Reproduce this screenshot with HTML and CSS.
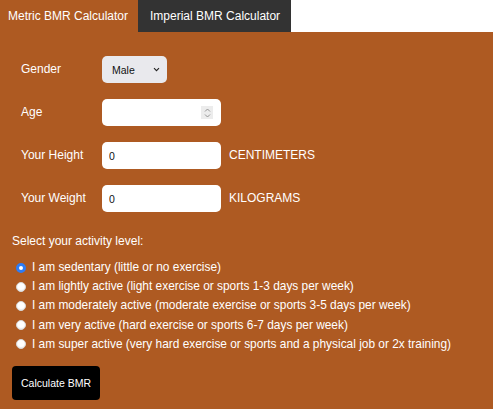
FILE: index.html
```html
<!DOCTYPE html>
<html lang="en">
<head>
<meta charset="utf-8">
<title>BMR Calculator</title>
<link rel="stylesheet" href="styles.css">
</head>
<body>
<nav class="tabs">
  <button class="tab tab-active" type="button">Metric BMR Calculator</button>
  <button class="tab" type="button">Imperial BMR Calculator</button>
</nav>
<main class="panel">
  <form class="bmr-form">
    <div class="fields">
      <label class="field-label" for="gender">Gender</label>
      <div class="select-wrap">
        <select id="gender" class="select">
          <option>Male</option>
          <option>Female</option>
        </select>
        <svg class="chevron" width="7" height="5" viewBox="0 0 7 5"><path d="M1 1.2 L3.5 3.7 L6 1.2" fill="none" stroke="#222" stroke-width="1.1"/></svg>
      </div>
      <span></span>

      <label class="field-label" for="age">Age</label>
      <div class="input-wrap">
        <input id="age" class="input" type="text">
        <span class="spinner">
          <svg width="7" height="12" viewBox="0 0 7 12"><path d="M1 4.5 L3.5 2 L6 4.5" fill="none" stroke="#8a8a8a" stroke-width="0.9"/><path d="M1 7.5 L3.5 10 L6 7.5" fill="none" stroke="#8a8a8a" stroke-width="0.9"/></svg>
        </span>
      </div>
      <span></span>

      <label class="field-label" for="height">Your Height</label>
      <input id="height" class="input" type="text" value="0">
      <span class="unit">CENTIMETERS</span>

      <label class="field-label" for="weight">Your Weight</label>
      <input id="weight" class="input" type="text" value="0">
      <span class="unit">KILOGRAMS</span>
    </div>

    <fieldset class="activity">
      <legend class="activity-title">Select your activity level:</legend>
      <label class="radio-row"><input class="radio" type="radio" name="act" checked> I am sedentary (little or no exercise)</label>
      <label class="radio-row"><input class="radio" type="radio" name="act"> I am lightly active (light exercise or sports 1-3 days per week)</label>
      <label class="radio-row"><input class="radio" type="radio" name="act"> I am moderately active (moderate exercise or sports 3-5 days per week)</label>
      <label class="radio-row"><input class="radio" type="radio" name="act"> I am very active (hard exercise or sports 6-7 days per week)</label>
      <label class="radio-row"><input class="radio" type="radio" name="act"> I am super active (very hard exercise or sports and a physical job or 2x training)</label>
    </fieldset>

    <button class="calc" type="button">Calculate BMR</button>
  </form>
</main>
</body>
</html>
```
FILE: styles.css
```css
* { box-sizing: border-box; }
html, body { height: 100%; }
body {
  margin: 0;
  background: #ffffff;
  font-family: "Liberation Sans", Arial, Helvetica, sans-serif;
  color: #ffffff;
  display: flex;
  flex-direction: column;
}
.tabs {
  display: flex;
  height: 32px;
  flex: none;
}
.tab {
  border: 0;
  margin: 0;
  height: 32px;
  padding: 0 11px 0 12px;
  font-family: inherit;
  font-size: 12px;
  color: #ffffff;
  background: #333333;
  cursor: pointer;
}
.tab-active {
  background: #ae5a22;
  padding: 0 10px 0 8px;
}
.panel {
  flex: 1;
  background: #ae5a22;
  padding: 24px 12px 0 12px;
}
.fields {
  margin-left: 9px;
  display: grid;
  grid-template-columns: 81px auto 1fr;
  row-gap: 16px;
  column-gap: 8px;
  align-items: center;
  justify-items: start;
}
.field-label {
  grid-column: 1;
  font-size: 12px;
  line-height: 15px;
}
.fields > :nth-child(3n+2) { margin-left: -8px; }
.select-wrap {
  position: relative;
  width: 65px;
  height: 27px;
}
.select {
  appearance: none;
  -webkit-appearance: none;
  width: 65px;
  height: 27px;
  border: 0;
  border-radius: 5px;
  background: #e9e9ed;
  padding: 0 0 0 10px;
  font-family: inherit;
  font-size: 10.5px;
  color: #111;
}
.chevron {
  position: absolute;
  right: 7px;
  top: 11px;
  pointer-events: none;
}
.input-wrap {
  position: relative;
  width: 119px;
  height: 27px;
}
.input {
  width: 119px;
  height: 27px;
  border: 0;
  border-radius: 5px;
  background: #ffffff;
  padding: 0 0 0 7px;
  font-family: inherit;
  font-size: 10.5px;
  color: #111;
}
.spinner {
  position: absolute;
  right: 8px;
  top: 7px;
  width: 12px;
  height: 13px;
  background: #ececec;
  display: flex;
  align-items: center;
  justify-content: center;
}
.unit {
  font-size: 12px;
  line-height: 15px;
}
.activity {
  border: 0;
  margin: 22px 0 0 0;
  padding: 0;
  display: flex;
  flex-direction: column;
}
.activity-title {
  padding: 0;
  font-size: 12px;
  line-height: 15px;
  margin-bottom: 9px;
}
.radio-row {
  display: flex;
  align-items: center;
  gap: 6px;
  height: 19.2px;
  font-size: 11.9px;
  line-height: 15px;
  white-space: nowrap;
}
.radio {
  appearance: none;
  -webkit-appearance: none;
  margin: 0 0 0 4px;
  width: 10px;
  height: 10px;
  border-radius: 50%;
  background: #ffffff;
  border: 1px solid #d7d7d7;
  box-shadow: inset 0 -1px 1px rgba(0,0,0,0.08);
  flex: none;
}
.radio:checked {
  border: 3px solid #2d7cf6;
  box-shadow: none;
}
.calc {
  margin-top: 12px;
  width: 88px;
  height: 34px;
  border: 0;
  border-radius: 4px;
  background: #000000;
  color: #ffffff;
  font-family: inherit;
  font-size: 10.5px;
  padding: 0;
}
```
